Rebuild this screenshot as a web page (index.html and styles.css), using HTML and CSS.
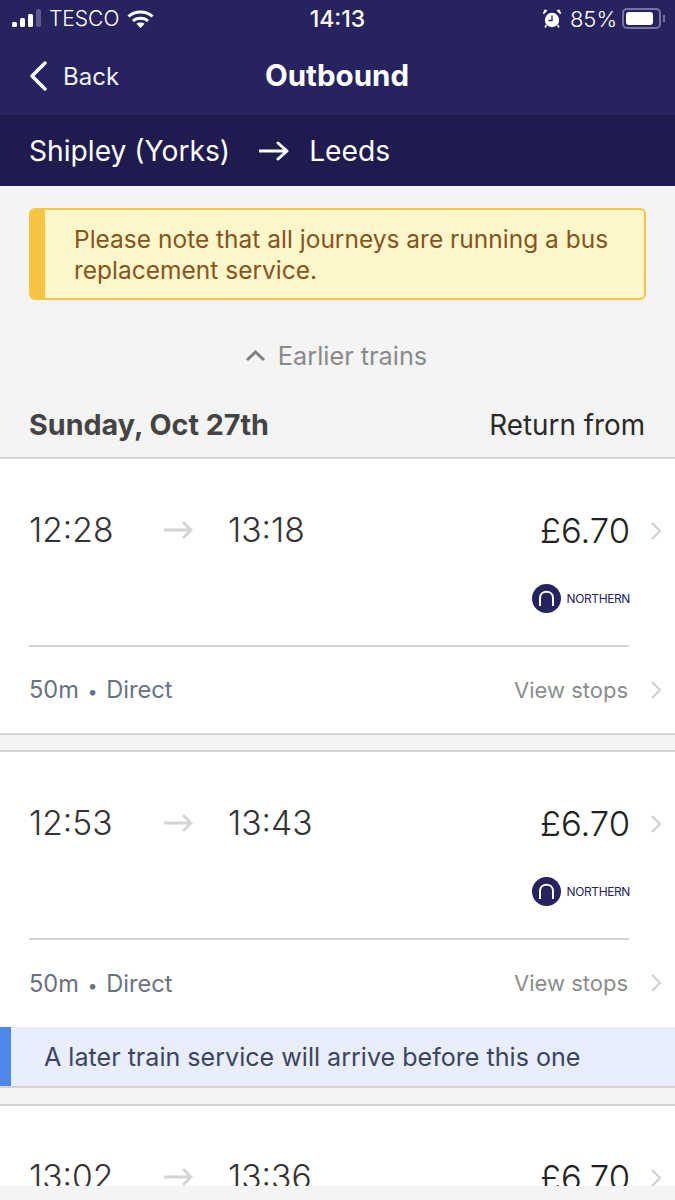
FILE: index.html
```html
<!DOCTYPE html>
<html>
   <head>
      <meta name="viewport" content="width=device-width, initial-scale=1">
      <title>Outbound</title>
      <link rel="stylesheet" href="styles.css">
   </head>
   <body>
      <div class="screen">

         <!-- Status bar -->
         <div class="status">
            <div class="statusLeft">
               <svg class="signal" width="29" height="19" viewBox="0 0 29 19">
                  <rect x="0" y="13" width="5" height="5" rx="1.5" fill="#fff" />
                  <rect x="8" y="9" width="5" height="9" rx="1.5" fill="#fff" />
                  <rect x="16" y="5" width="5" height="13" rx="1.5" fill="#fff" />
                  <rect x="24" y="0" width="5" height="18" rx="1.5" fill="#5d5a8c" />
               </svg>
               <span class="carrier">TESCO</span>
               <svg width="27" height="20" viewBox="0 0 27 20">
                  <path d="M1.5,7.5 C8,1.5 19,1.5 25.5,7.5" class="wifi" />
                  <path d="M6,12 C10,8.4 17,8.4 21,12" class="wifi" />
                  <path d="M13.5,19 L9.3,14.8 C11.6,13 15.4,13 17.7,14.8 Z" fill="#fff" />
               </svg>
            </div>
            <div class="clock">14:13</div>
            <div class="statusRight">
               <svg width="18" height="20" viewBox="0 0 18 20">
                  <circle cx="9" cy="11" r="7.2" fill="#fff" />
                  <path d="M9,6.5 L9,11.5 L5.5,11.5" stroke="#27235f" stroke-width="1.3" fill="none" />
                  <path d="M0.5,5 L4,1.5 L1.5,1 Z M17.5,5 L14,1.5 L16.5,1 Z" fill="#fff" stroke="#fff" />
                  <path d="M3.5,16 L2,18.5 M14.5,16 L16,18.5" stroke="#fff" stroke-width="1.6" />
               </svg>
               <span class="percent">85%</span>
               <div class="battery"><div class="batteryFill"></div></div>
               <div class="batteryCap"></div>
            </div>
         </div>

         <!-- Title bar -->
         <div class="titleBar">
            <div class="back">
               <svg width="18" height="30" viewBox="0 0 18 30">
                  <path d="M16,2 L3,15 L16,28" class="backArrow" />
               </svg>
               <span>Back</span>
            </div>
            <div class="title">Outbound</div>
         </div>

         <!-- Route -->
         <div class="route">
            <span>Shipley (Yorks)</span>
            <svg class="routeArrow" width="30" height="20" viewBox="0 0 30 20">
               <path d="M1,10 L28,10 M19,2 L28,10 L19,18" />
            </svg>
            <span>Leeds</span>
         </div>

         <div class="content">

            <div class="notice">
               <div class="noticeEdge"></div>
               <div class="noticeText">Please note that all journeys are running a bus replacement service.</div>
            </div>

            <div class="earlier">
               <svg width="21" height="13" viewBox="0 0 21 13">
                  <path d="M2,11 L10.5,3 L19,11" />
               </svg>
               <span>Earlier trains</span>
            </div>

            <div class="dateRow">
               <span class="date">Sunday, Oct 27th</span>
               <span class="returnFrom">Return from</span>
            </div>

            <!-- Journey 1 -->
            <div class="journey">
               <div class="journeyMain">
                  <div class="times">
                     <span class="time">12:28</span>
                     <svg class="timeArrow" width="30" height="20" viewBox="0 0 30 20"><path d="M1,10 L28,10 M20,2 L28,10 L20,18" /></svg>
                     <span class="time">13:18</span>
                  </div>
                  <div class="fare">
                     <span class="price">£6.70</span>
                     <div class="operator">
                        <svg width="29" height="29" viewBox="0 0 29 29">
                           <circle cx="14.5" cy="14.5" r="14.5" fill="#27235f" />
                           <path d="M8,22 L8,14 C8,5.5 21,5.5 21,14 L21,22" fill="none" stroke="#fff" stroke-width="2" />
                        </svg>
                        <span>NORTHERN</span>
                     </div>
                  </div>
                  <svg class="chevron mainChevron" width="12" height="20" viewBox="0 0 12 20"><path d="M2,2 L10,10 L2,18" /></svg>
               </div>
               <div class="divider"></div>
               <div class="journeyFoot">
                  <span class="duration">50m <b>•</b> Direct</span>
                  <span class="stops">View stops</span>
                  <svg class="chevron" width="12" height="20" viewBox="0 0 12 20"><path d="M2,2 L10,10 L2,18" /></svg>
               </div>
            </div>

            <!-- Journey 2 -->
            <div class="journey">
               <div class="journeyMain">
                  <div class="times">
                     <span class="time">12:53</span>
                     <svg class="timeArrow" width="30" height="20" viewBox="0 0 30 20"><path d="M1,10 L28,10 M20,2 L28,10 L20,18" /></svg>
                     <span class="time">13:43</span>
                  </div>
                  <div class="fare">
                     <span class="price">£6.70</span>
                     <div class="operator">
                        <svg width="29" height="29" viewBox="0 0 29 29">
                           <circle cx="14.5" cy="14.5" r="14.5" fill="#27235f" />
                           <path d="M8,22 L8,14 C8,5.5 21,5.5 21,14 L21,22" fill="none" stroke="#fff" stroke-width="2" />
                        </svg>
                        <span>NORTHERN</span>
                     </div>
                  </div>
                  <svg class="chevron mainChevron" width="12" height="20" viewBox="0 0 12 20"><path d="M2,2 L10,10 L2,18" /></svg>
               </div>
               <div class="divider"></div>
               <div class="journeyFoot">
                  <span class="duration">50m <b>•</b> Direct</span>
                  <span class="stops">View stops</span>
                  <svg class="chevron" width="12" height="20" viewBox="0 0 12 20"><path d="M2,2 L10,10 L2,18" /></svg>
               </div>
               <div class="laterNote">A later train service will arrive before this one</div>
            </div>

            <!-- Journey 3, cut off by the bottom bar -->
            <div class="journey lastJourney">
               <div class="journeyMain">
                  <div class="times">
                     <span class="time">13:02</span>
                     <svg class="timeArrow" width="30" height="20" viewBox="0 0 30 20"><path d="M1,10 L28,10 M20,2 L28,10 L20,18" /></svg>
                     <span class="time">13:36</span>
                  </div>
                  <div class="fare">
                     <span class="price">£6.70</span>
                  </div>
                  <svg class="chevron mainChevron" width="12" height="20" viewBox="0 0 12 20"><path d="M2,2 L10,10 L2,18" /></svg>
               </div>
            </div>

         </div>

         <div class="bottomStrip"></div>
      </div>
   </body>
</html>
```
FILE: styles.css
```css
* {
   box-sizing : border-box;
}

body {
   margin : 0;
   font-family : Inter, "Liberation Sans", sans-serif;
   background-color : #f4f4f4;
}

.screen {
   width : 675px;
   height : 1200px;
   overflow : hidden;
   display : flex;
   flex-direction : column;
}

/* Status bar */

.status {
   height : 37px;
   flex : none;
   padding : 0 10px 0 12px;
   background-color : #27235f;
   color : #fff;
   font-size : 21px;
   display : grid;
   grid-template-columns : 1fr auto 1fr;
   align-items : center;
}

.statusLeft, .statusRight {
   display : flex;
   align-items : center;
}

.statusRight {
   justify-content : flex-end;
}

.carrier {
   margin : 0 8px 0 8px;
   font-weight : 300;
}

.wifi {
   fill : none;
   stroke : #fff;
   stroke-width : 3px;
}

.clock {
   margin-left : -2px;
   font-size : 23px;
   font-weight : 500;
}

.percent {
   margin : 0 5px 0 9px;
   font-size : 22px;
   font-weight : 300;
}

.battery {
   width : 39px;
   height : 21px;
   padding : 2px;
   border : 2px solid #77749f;
   border-radius : 5px;
}

.batteryFill {
   width : 86%;
   height : 100%;
   background-color : #fff;
   border-radius : 3px;
}

.batteryCap {
   width : 2px;
   height : 7px;
   margin-left : 2px;
   background-color : #77749f;
}

/* Title bar */

.titleBar {
   height : 78px;
   flex : none;
   position : relative;
   padding-left : 29px;
   background-color : #27235f;
   color : #fff;
   display : flex;
   align-items : center;
   justify-content : center;
}

.back {
   position : absolute;
   left : 29px;
   top : 24px;
   display : flex;
   align-items : center;
   gap : 16px;
   font-size : 24px;
   color : #f0f0f6;
}

.backArrow {
   fill : none;
   stroke : #fff;
   stroke-width : 3.4px;
   stroke-linecap : round;
   stroke-linejoin : round;
}

.title {
   margin-left : -30px;
   margin-top : -2px;
   font-size : 29.5px;
   font-weight : 700;
}

/* Route */

.route {
   height : 71px;
   flex : none;
   padding : 0 29px 0 29px;
   background-color : #1f1b4f;
   color : #fff;
   font-size : 28.2px;
   display : flex;
   align-items : center;
}

.routeArrow {
   margin : 0 20px 0 29px;
}

.routeArrow path {
   fill : none;
   stroke : #fff;
   stroke-width : 3px;
   stroke-linecap : round;
   stroke-linejoin : round;
}

/* Content */

.content {
   flex : 1;
   min-height : 0;
   overflow : hidden;
   padding-top : 22px;
   background-color : #f4f4f4;
}

.notice {
   height : 92px;
   margin : 0 29px 0 29px;
   display : flex;
   background-color : #fdf6cb;
   border : 2px solid #f5c542;
   border-radius : 6px;
   overflow : hidden;
}

.noticeEdge {
   width : 14px;
   flex : none;
   background-color : #f6c343;
}

.noticeText {
   padding : 14px 20px 0 29px;
   font-size : 24.5px;
   line-height : 31px;
   color : #84551d;
}

.earlier {
   height : 24px;
   margin-top : 43px;
   padding-right : 3px;
   display : flex;
   align-items : center;
   justify-content : center;
   gap : 12px;
   font-size : 25.3px;
   color : #8a8a8a;
}

.earlier path {
   fill : none;
   stroke : #7f7f7f;
   stroke-width : 3px;
}

.dateRow {
   height : 33px;
   margin-top : 41px;
   padding : 0 30px 0 29px;
   display : flex;
   align-items : center;
   justify-content : space-between;
}

.date {
   font-size : 28.7px;
   font-weight : 700;
   color : #444;
}

.returnFrom {
   font-size : 27.8px;
   color : #2a2a2a;
}

/* Journeys */

.journey {
   margin : 15.5px 0 0 0;
   background-color : #fff;
   border-top : 2px solid #d4d4d4;
   border-bottom : 2px solid #d4d4d4;
}

.journeyMain {
   height : 186px;
   margin : 0 13px 0 29px;
   padding-top : 51px;
   display : flex;
   align-items : flex-start;
}

.times {
   flex : 1;
   display : flex;
   align-items : center;
}

.time {
   width : 134px;
   font-size : 33.6px;
   font-weight : 350;
   line-height : 40px;
   color : #333;
}

.timeArrow {
   margin-right : 35px;
}

.timeArrow path {
   fill : none;
   stroke : #d4d4d4;
   stroke-width : 3px;
}

.fare {
   margin-top : -1px;
   display : flex;
   flex-direction : column;
   align-items : flex-end;
}

.price {
   font-size : 34.6px;
   font-weight : 350;
   line-height : 42px;
   color : #222;
}

.operator {
   margin-top : 33px;
   display : flex;
   align-items : center;
   gap : 6px;
   font-size : 12px;
   letter-spacing : -0.4px;
   color : #27235f;
}

.chevron path {
   fill : none;
   stroke : #cfcfcf;
   stroke-width : 2px;
}

.mainChevron {
   margin : 11px 0 0 20px;
}

.divider {
   height : 2px;
   margin : 0 46px 0 29px;
   background-color : #d4d4d4;
}

.journeyFoot {
   height : 86px;
   margin : 0 13px 0 29px;
   display : flex;
   align-items : center;
   justify-content : space-between;
}

.duration {
   flex : 1;
   font-size : 23.6px;
   color : #6b7180;
}

.duration b {
   margin : 0 2px 0 2px;
   font-weight : 400;
   font-size : 18px;
}

.stops {
   margin-right : 22px;
   font-size : 22px;
   color : #8c8c8c;
}

.laterNote {
   height : 59px;
   margin-top : 1px;
   padding-left : 33px;
   display : flex;
   align-items : center;
   background-color : #e8eefb;
   border-left : 11px solid #4f86ec;
   font-size : 25.1px;
   color : #3c4560;
}

.journey.lastJourney {
   margin-top : 16px;
}

.bottomStrip {
   height : 14px;
   flex : none;
   background-color : #f4f4f4;
}
```
